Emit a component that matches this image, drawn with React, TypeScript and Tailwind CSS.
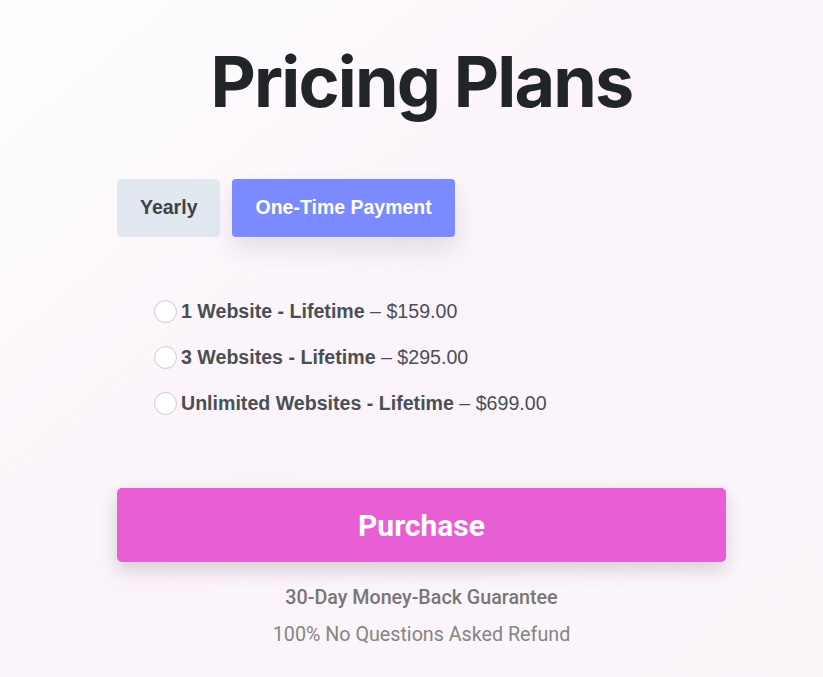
import React, { useState } from 'react';

const plans = [
  { id: 'p1', name: '1 Website - Lifetime', price: '$159.00' },
  { id: 'p2', name: '3 Websites - Lifetime', price: '$295.00' },
  { id: 'p3', name: 'Unlimited Websites - Lifetime', price: '$699.00' },
];

const App: React.FC = () => {
  const [mode, setMode] = useState<'yearly' | 'once'>('once');
  const [selected, setSelected] = useState<string | null>(null);

  return (
    <div className="min-h-[677px] w-full bg-gradient-to-br from-[#fefefe] via-[#fbf3fa] to-[#fcf6fb]">
      <div className="mx-auto w-[629px] pl-[20px] pt-[34px]">
        {/* Title */}
        <h1 className="text-center font-['Inter',sans-serif] text-[70px] font-bold leading-[96px] tracking-[-0.026em] text-[#212529]">
          Pricing Plans
        </h1>

        {/* Tabs */}
        <div className="mt-[49px] flex gap-3 font-['Liberation_Sans',Arial,sans-serif]">
          <button
            onClick={() => setMode('yearly')}
            className={`h-[58px] rounded-[4px] px-[23px] text-[19.5px] font-bold ${
              mode === 'yearly' ? 'bg-[#7b8afe] text-white shadow-[0_12px_24px_rgba(60,40,80,0.12)]' : 'bg-[#e2e8f0] text-[#3d434a]'
            }`}
          >
            Yearly
          </button>
          <button
            onClick={() => setMode('once')}
            className={`h-[58px] rounded-[4px] px-[23px] text-[19.5px] font-bold ${
              mode === 'once' ? 'bg-[#7b8afe] text-white shadow-[0_12px_24px_rgba(60,40,80,0.12)]' : 'bg-[#e2e8f0] text-[#3d434a]'
            }`}
          >
            One-Time Payment
          </button>
        </div>

        {/* Options */}
        <div className="mt-[63px] flex flex-col gap-[23px] pl-[37px] font-['Liberation_Sans',Arial,sans-serif] text-[19.6px] text-[#4a4f56]">
          {plans.map((plan) => (
            <label key={plan.id} className="flex cursor-pointer items-center gap-[4px] leading-[23px]">
              <span
                onClick={() => setSelected(plan.id)}
                className="flex h-[23px] w-[23px] items-center justify-center rounded-full border border-[#c9c9cf] bg-white"
              >
                {selected === plan.id && <span className="h-[11px] w-[11px] rounded-full bg-[#7b8afe]" />}
              </span>
              <span>
                <span className="font-bold">{plan.name}</span> – {plan.price}
              </span>
            </label>
          ))}
        </div>

        {/* Purchase */}
        <button className="mt-[73px] h-[74px] w-full rounded-[5px] bg-[#e85ed4] font-['Roboto',sans-serif] text-[30px] font-bold text-white shadow-[0_8px_18px_rgba(60,30,60,0.18)]">
          Purchase
        </button>

        <div className="mt-[23px] text-center font-['Roboto',sans-serif] text-[19.7px]">
          <p className="font-medium leading-[26px] text-[#777777]">30-Day Money-Back Guarantee</p>
          <p className="mt-[11px] leading-[26px] text-[#858585]">100% No Questions Asked Refund</p>
        </div>
      </div>
    </div>
  );
};

export default App;
